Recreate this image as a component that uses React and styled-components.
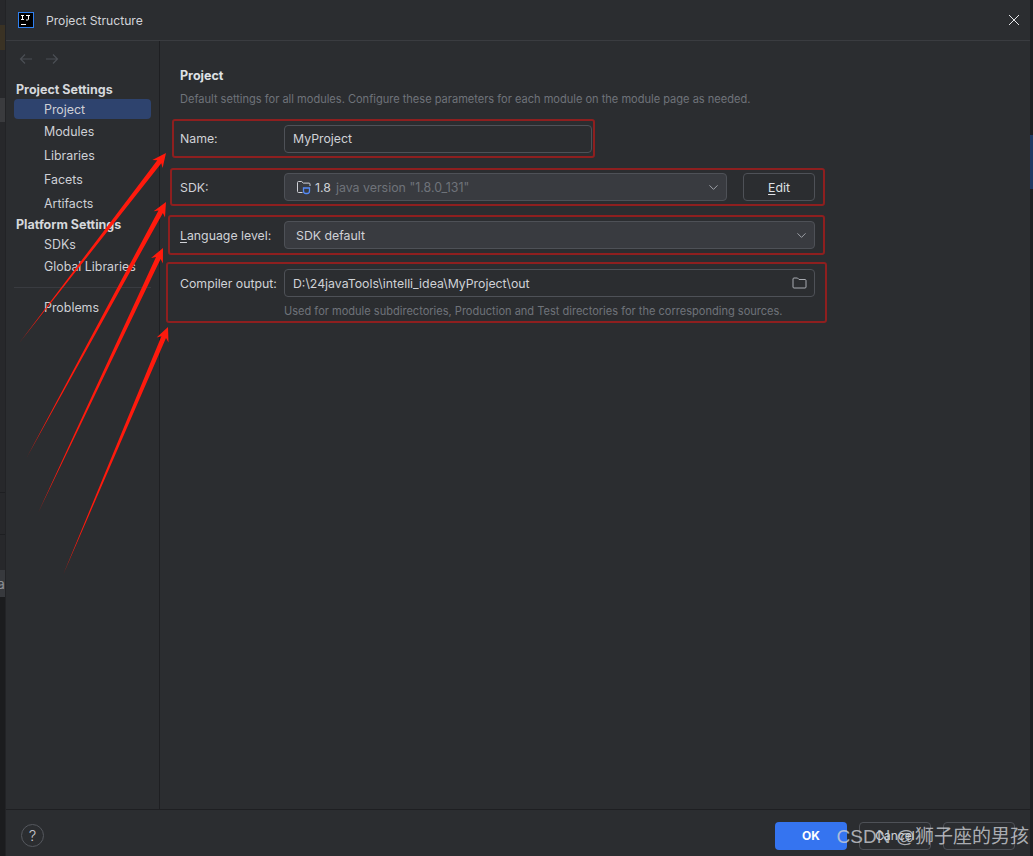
import React from "react";
import styled, { createGlobalStyle } from "styled-components";
import { ChevronDown } from "lucide-react";

const Global = createGlobalStyle`
  html, body { margin: 0; padding: 0; background: #1e1f22; }
  body { font-family: Inter, "Liberation Sans", "Noto Sans CJK SC", sans-serif; overflow: hidden; }
`;

const Screen = styled.div`
  position: relative; width: 1033px; height: 856px; display: flex; overflow: hidden; background: #2b2d30;
  font-size: 12.3px; color: #ced0d6;
`;
const BackStrip = styled.div`
  width: 6px; flex: none; box-sizing: border-box; background: #27282b; border-right: 1px solid #222326; position: relative; overflow: hidden;
`;
const StripPatch = styled.div`
  position: absolute; left: 0; width: ${p => p.$w || 6}px; top: ${p => p.$top}px; height: ${p => p.$h}px; background: ${p => p.$c};
  color: #8d9096; font-size: 14px; line-height: ${p => p.$h}px; text-indent: -3px; overflow: hidden;
`;
const RightStrip = styled.div`
  width: 3px; flex: none; background: #1e1f22; position: relative;
`;
const Dialog = styled.div`
  flex: 1; min-width: 0; display: flex; flex-direction: column;
`;
const TitleBar = styled.div`
  height: 40px; flex: none; display: flex; align-items: center; padding: 0 10px 0 12px; border-bottom: 1px solid #3a3c40;
`;
const TitleText = styled.span`
  margin-left: 12px; font-size: 12.15px; color: #d2d4d9; flex: 1;
`;
const Body = styled.div`
  flex: 1; min-height: 0; display: flex;
`;
const Sidebar = styled.div`
  width: 137px; flex: none; border-right: 1px solid #1e1f22; padding: 9px 8px 0; box-sizing: content-box;
  display: flex; flex-direction: column; font-size: 12.4px;
`;
const NavArrows = styled.div`
  height: 17px; display: flex; gap: 12px; padding-left: 5px; align-items: center; margin-bottom: 15px;
`;
const Heading = styled.div`
  font-weight: 700; font-size: 12.5px; color: #d6d8dc; padding-left: 2px; height: 15px; line-height: 15px;
  margin-top: ${p => p.$mt || 0}px; margin-bottom: ${p => p.$mb || 0}px;
`;
const NavItem = styled.div`
  height: ${p => p.$h || 24}px; line-height: ${p => (p.$h || 24) + 2}px; padding-left: 30px; border-radius: 4px;
  background: ${p => (p.$active ? "#2e436e" : "transparent")}; color: #ced0d6; white-space: nowrap;
`;
const NavDivider = styled.div`
  height: 1px; background: #393b40; margin: 10px 0 8px;
`;
const Main = styled.div`
  flex: 1; min-width: 0; padding: 27px 0 0 20px; display: flex; flex-direction: column;
`;
const PageTitle = styled.div`
  font-weight: 700; font-size: 12.5px; color: #dfe1e5; line-height: 15px;
`;
const Hint = styled.div`
  font-size: 11.05px; color: #6f737a; line-height: 14px; margin-top: ${p => p.$mt || 0}px; margin-left: ${p => p.$ml || 0}px; white-space: nowrap;
`;
const FormRow = styled.div`
  display: flex; align-items: center; height: 28px; margin-top: ${p => p.$mt}px;
`;
const Label = styled.label`
  width: 104px; flex: none; color: #d0d2d7; white-space: nowrap; margin-top: ${p => p.$nudge || 0}px;
  u { text-underline-offset: 2px; }
`;
const TextField = styled.div`
  box-sizing: border-box; height: 28px; width: ${p => p.$w}px; border: 1px solid #4e5157; border-radius: 4px;
  display: flex; align-items: center; justify-content: space-between; padding: 0 7px 0 8px; color: #d0d2d7; background: #2b2d30;
`;
const FieldValue = styled.span`
  margin-top: ${p => p.$nudge || 0}px;
`;
const Select = styled.div`
  box-sizing: border-box; height: 28px; width: ${p => p.$w}px; border: 1px solid #4e5157; border-radius: 4px;
  display: flex; align-items: center; justify-content: space-between; padding: 0 5px 0 ${p => p.$pl}px; background: #393b40; color: #d0d2d7;
  white-space: nowrap;
`;
const SelectLabel = styled.span`
  display: flex; align-items: center;
`;
const SdkIcon = styled.svg`
  margin-right: 3px; flex: none;
`;
const Muted = styled.span`
  color: #6f737a; margin-left: 5px; font-size: 12.4px;
`;
const EditButton = styled.div`
  box-sizing: border-box; height: 28px; width: 72px; margin-left: 16px; border: 1px solid #4e5157; border-radius: 4px;
  display: flex; align-items: center; justify-content: center; color: #dfe1e5;
  u { text-underline-offset: 2px; }
`;
const Footer = styled.div`
  height: 46px; flex: none; border-top: 1px solid #1e1f22; display: flex; align-items: center; padding: 0 15px 0 15px; position: relative;
`;
const HelpButton = styled.div`
  width: 23px; height: 23px; border: 1px solid #55585e; border-radius: 50%; display: flex; align-items: center; justify-content: center;
  color: #c4c6cc; font-size: 15px; font-weight: 300; margin-top: 5px; box-sizing: border-box;
`;
const FooterActions = styled.div`
  margin-left: auto; display: flex; gap: 12px; margin-top: 5px;
`;
const OkButton = styled.div`
  box-sizing: border-box; width: 72px; height: 28px; border-radius: 4px; background: #3574f0; color: #fff; font-weight: 700; font-size: 12px;
  display: flex; align-items: center; justify-content: center;
`;
const GhostButton = styled.div`
  box-sizing: border-box; width: 72px; height: 28px; border-radius: 4px; border: 1px solid #4e5157; color: #d0d2d7; font-size: 12px;
  display: flex; align-items: center; justify-content: center;
`;
const Watermark = styled.div`
  position: absolute; right: 4px; bottom: 7px; font-family: "Liberation Sans", "Noto Sans CJK SC", sans-serif; font-size: 19px;
  color: rgba(205, 208, 214, 0.8); white-space: nowrap; line-height: 24px;
`;
const Note = styled.div`
  position: absolute; box-sizing: border-box; left: ${p => p.$x}px; top: ${p => p.$y}px; width: ${p => p.$w}px; height: ${p => p.$h}px;
  border: 2px solid #8e1f1f; border-radius: 3px; pointer-events: none;
`;
const ArrowLayer = styled.svg`
  position: absolute; inset: 0; pointer-events: none;
`;

const arrow = (tx, ty, sx, sy) => {
  const dx = tx - sx, dy = ty - sy, len = Math.hypot(dx, dy);
  const ux = dx / len, uy = dy / len, nx = -uy, ny = ux;
  const p = (a, b) => `${(tx - ux * a + nx * b).toFixed(1)},${(ty - uy * a + ny * b).toFixed(1)}`;
  return `${sx},${sy} ${p(11, 2.5)} ${p(14, 6.5)} ${p(0, 0)} ${p(14, -6.5)} ${p(11, -2.5)}`;
};

export default function App() {
  return (
    <Screen>
      <Global />
      <BackStrip>
        <StripPatch $top={25} $h={25} $c="#3a3224" />
        <StripPatch $top={98} $h={24} $c="#3a3b3e" />
        <StripPatch $top={492} $h={1} $c="#1e1f22" />
        <StripPatch $top={534} $h={1} $c="#1e1f22" />
        <StripPatch $top={570} $h={27} $c="#37393d">a</StripPatch>
        <StripPatch $top={597} $h={259} $c="#1b1c1e" />
      </BackStrip>
      <Dialog>
        <TitleBar>
          <svg width="16" height="16" viewBox="0 0 16 16">
            <rect x="0.5" y="0.5" width="15" height="15" fill="#000" stroke="#2f80f0" />
            <rect x="3" y="12" width="5" height="1" fill="#fff" />
            <path d="M3 3.5h3M4.5 3.5v4M3 7.5h3M8 3.5h4M10.5 3.5v3.5q0 1-1 1H8" stroke="#fff" strokeWidth="1" fill="none" />
          </svg>
          <TitleText>Project Structure</TitleText>
          <svg width="12" height="12" viewBox="0 0 12 12">
            <path d="M1 1l10 10M11 1L1 11" stroke="#e6e7ea" strokeWidth="1" />
          </svg>
        </TitleBar>
        <Body>
          <Sidebar>
            <NavArrows>
              <svg width="14" height="12" viewBox="0 0 14 12"><path d="M13 6H1.5M6 1.5L1.5 6 6 10.5" stroke="#4b4e54" strokeWidth="1.2" fill="none" /></svg>
              <svg width="14" height="12" viewBox="0 0 14 12"><path d="M1 6h11.5M8 1.5L12.5 6 8 10.5" stroke="#4b4e54" strokeWidth="1.2" fill="none" /></svg>
            </NavArrows>
            <Heading $mb={2}>Project Settings</Heading>
            <NavItem $active $h={20}>Project</NavItem>
            <NavItem>Modules</NavItem>
            <NavItem>Libraries</NavItem>
            <NavItem>Facets</NavItem>
            <NavItem>Artifacts</NavItem>
            <Heading $mt={2}>Platform Settings</Heading>
            <NavItem $h={23}>SDKs</NavItem>
            <NavItem $h={22}>Global Libraries</NavItem>
            <NavDivider />
            <NavItem $h={22}>Problems</NavItem>
          </Sidebar>
          <Main>
            <PageTitle>Project</PageTitle>
            <Hint $mt={9}>Default settings for all modules. Configure these parameters for each module on the module page as needed.</Hint>
            <FormRow $mt={19}>
              <Label $nudge={-2}>Name:</Label>
              <TextField $w={308}><FieldValue $nudge={-2}>MyProject</FieldValue></TextField>
            </FormRow>
            <FormRow $mt={20}>
              <Label>SDK:</Label>
              <Select $w={443} $pl={11}>
                <SelectLabel>
                  <SdkIcon width="16" height="16" viewBox="0 0 16 16" fill="none">
                    <path d="M6.5 13.5H2.5a1 1 0 0 1-1-1v-9a1 1 0 0 1 1-1h3.2l1.6 1.6h5.7a1 1 0 0 1 1 1V7" stroke="#ced0d6" />
                    <path d="M7.5 9h6v3a2.5 2.5 0 0 1-2.5 2.5h-1A2.5 2.5 0 0 1 7.5 12z" stroke="#548af7" strokeWidth="1.3" />
                  </SdkIcon>
                  1.8<Muted>java version "1.8.0_131"</Muted>
                </SelectLabel>
                <ChevronDown size={15} color="#b4b8bf" strokeWidth={1.3} />
              </Select>
              <EditButton><span><u>E</u>dit</span></EditButton>
            </FormRow>
            <FormRow $mt={20}>
              <Label><u>L</u>anguage level:</Label>
              <Select $w={531} $pl={11}>
                <SelectLabel>SDK default</SelectLabel>
                <ChevronDown size={15} color="#b4b8bf" strokeWidth={1.3} />
              </Select>
            </FormRow>
            <FormRow $mt={20}>
              <Label>Compiler output:</Label>
              <TextField $w={531}>
                D:\24javaTools\intelli_idea\MyProject\out
                <svg width="15" height="14" viewBox="0 0 15 14" fill="none">
                  <path d="M1 3a1 1 0 0 1 1-1h3.5l1.5 1.5h6a1 1 0 0 1 1 1V11a1 1 0 0 1-1 1H2a1 1 0 0 1-1-1z" stroke="#a8abb1" />
                </svg>
              </TextField>
            </FormRow>
            <Hint $mt={7} $ml={104}>Used for module subdirectories, Production and Test directories for the corresponding sources.</Hint>
          </Main>
        </Body>
        <Footer>
          <HelpButton>?</HelpButton>
          <FooterActions>
            <OkButton>OK</OkButton>
            <GhostButton>Cancel</GhostButton>
            <GhostButton />
          </FooterActions>
        </Footer>
      </Dialog>
      <RightStrip>
        <StripPatch $top={135} $h={54} $w={3} $c="#1f3a63" />
      </RightStrip>

      <Note $x={172} $y={119} $w={423} $h={39} />
      <Note $x={170} $y={168} $w={655} $h={38} />
      <Note $x={168} $y={215} $w={657} $h={40} />
      <Note $x={166} $y={262} $w={661} $h={61} />
      <ArrowLayer width="1033" height="856" viewBox="0 0 1033 856">
        <g fill="#ff1a0d">
          <polygon points={arrow(166, 153, 20, 342)} />
          <polygon points={arrow(166, 202, 27, 457)} />
          <polygon points={arrow(163, 248, 38, 513)} />
          <polygon points={arrow(168, 327, 63, 575)} />
        </g>
      </ArrowLayer>
      <Watermark>CSDN @狮子座的男孩</Watermark>
    </Screen>
  );
}
